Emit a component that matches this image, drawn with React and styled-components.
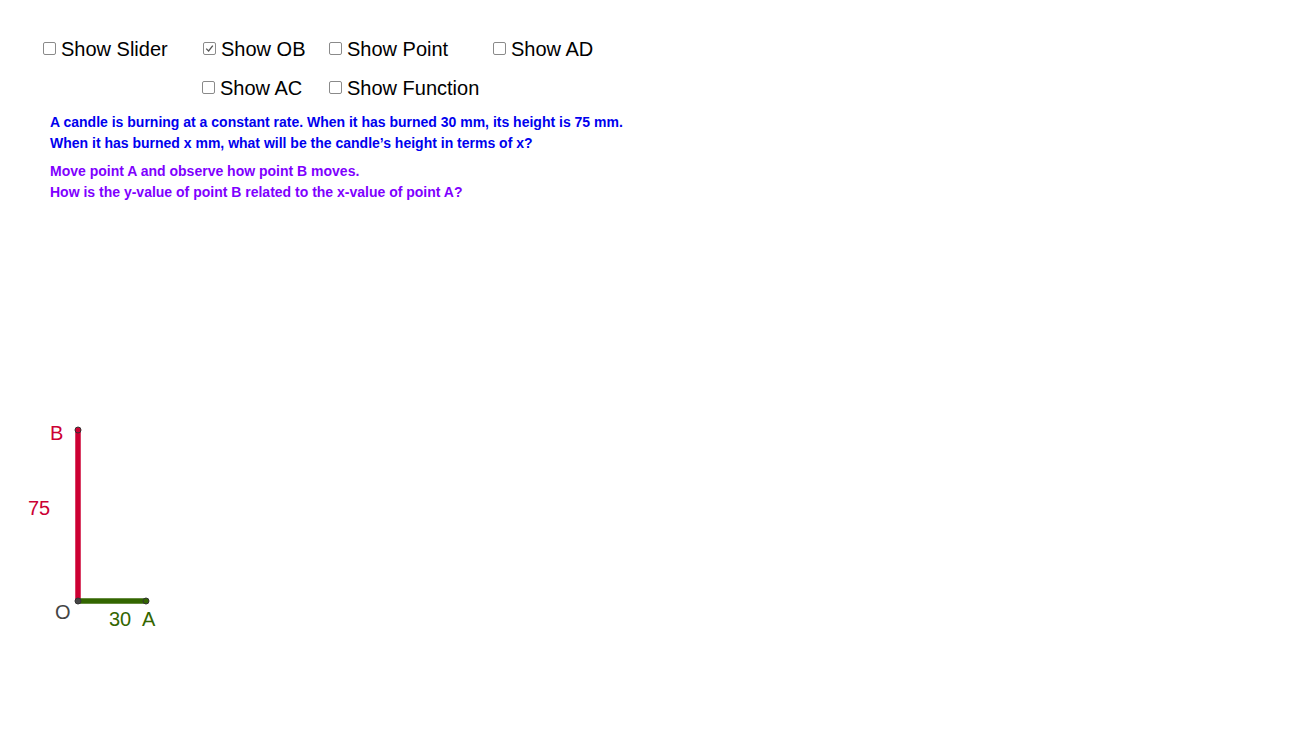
import styled, { createGlobalStyle } from "styled-components"

const GlobalStyle = createGlobalStyle`
  html, body {
    margin: 0;
    padding: 0;
    background: #ffffff;
  }
  body {
    font-family: "Liberation Sans", Arial, sans-serif;
  }
`;

const Applet = styled.div`
  width: 1311px;
  height: 748px;
  overflow: hidden;
  background: #ffffff;
`;

const Controls = styled.div`
  display: grid;
  grid-template-columns: 159px 127px 164px auto;
  grid-template-rows: 39px 24px;
  padding: 37px 0 0 43px;
`;

const Option = styled.label`
  display: flex;
  align-items: center;
  height: 24px;
  gap: 5px;
  font-size: 20px;
  line-height: 24px;
  color: #000000;
  grid-column: ${(p) => p.col};
  grid-row: ${(p) => p.row};
  margin-left: ${(p) => p.shift || 0}px;
  white-space: nowrap;
  cursor: pointer;
`;

const Box = styled.span`
  box-sizing: border-box;
  width: 13px;
  height: 13px;
  margin-top: -1px;
  border: 1px solid #8a8a8a;
  border-radius: 2px;
  background: #ffffff;
  display: flex;
  align-items: center;
  justify-content: center;
`;

const Prompt = styled.div`
  margin: ${(p) => p.top}px 0 0 50px;
  font-size: 14px;
  font-weight: bold;
  line-height: 21px;
  color: ${(p) => p.color};
`;

const Figure = styled.svg`
  display: block;
  margin-top: 197px;
  font-family: "Liberation Sans", Arial, sans-serif;
  font-size: 20px;
`;

const options = [
  { label: "Show Slider", col: 1, row: 1 },
  { label: "Show OB", col: 2, row: 1, checked: true, shift: 1 },
  { label: "Show Point", col: 3, row: 1 },
  { label: "Show AD", col: 4, row: 1 },
  { label: "Show AC", col: 2, row: 2 },
  { label: "Show Function", col: 3, row: 2 },
];

const Check = () => (
  <svg width="9" height="9" viewBox="0 0 9 9">
    <path d="M1.2 4.6 L3.6 7 L7.8 1.6" fill="none" stroke="#555" strokeWidth="1.3" />
  </svg>
);

const App = () => {
  return (
    <Applet>
      <GlobalStyle />
      <Controls>
        {options.map((o) => (
          <Option key={o.label} col={o.col} row={o.row} shift={o.shift}>
            <Box>{o.checked && <Check />}</Box>
            {o.label}
          </Option>
        ))}
      </Controls>
      <Prompt color="#0000ee" top={12}>
        A candle is burning at a constant rate. When it has burned 30 mm, its height is 75 mm.
        <br />
        When it has burned x mm, what will be the candle’s height in terms of x?
      </Prompt>
      <Prompt color="#7f00ff" top={7}>
        Move point A and observe how point B moves.
        <br />
        How is the y-value of point B related to the x-value of point A?
      </Prompt>
      <Figure width="200" height="240" viewBox="0 0 200 240">
        <line x1="78" y1="30" x2="78" y2="201" stroke="#cc0033" strokeWidth="5.5" />
        <line x1="78" y1="201" x2="146" y2="201" stroke="#336600" strokeWidth="5.5" />
        <circle cx="78" cy="30" r="3" fill="#cc0033" stroke="#333" strokeWidth="1" />
        <circle cx="146" cy="201" r="3" fill="#336600" stroke="#333" strokeWidth="1" />
        <circle cx="78" cy="201" r="3" fill="#444" stroke="#333" strokeWidth="1" />
        <text x="50" y="40" fill="#cc0033">B</text>
        <text x="28" y="115" fill="#cc0033">75</text>
        <text x="55" y="219" fill="#444444">O</text>
        <text x="109" y="226" fill="#336600">30</text>
        <text x="142" y="226" fill="#336600">A</text>
      </Figure>
    </Applet>
  )
}

export default App
